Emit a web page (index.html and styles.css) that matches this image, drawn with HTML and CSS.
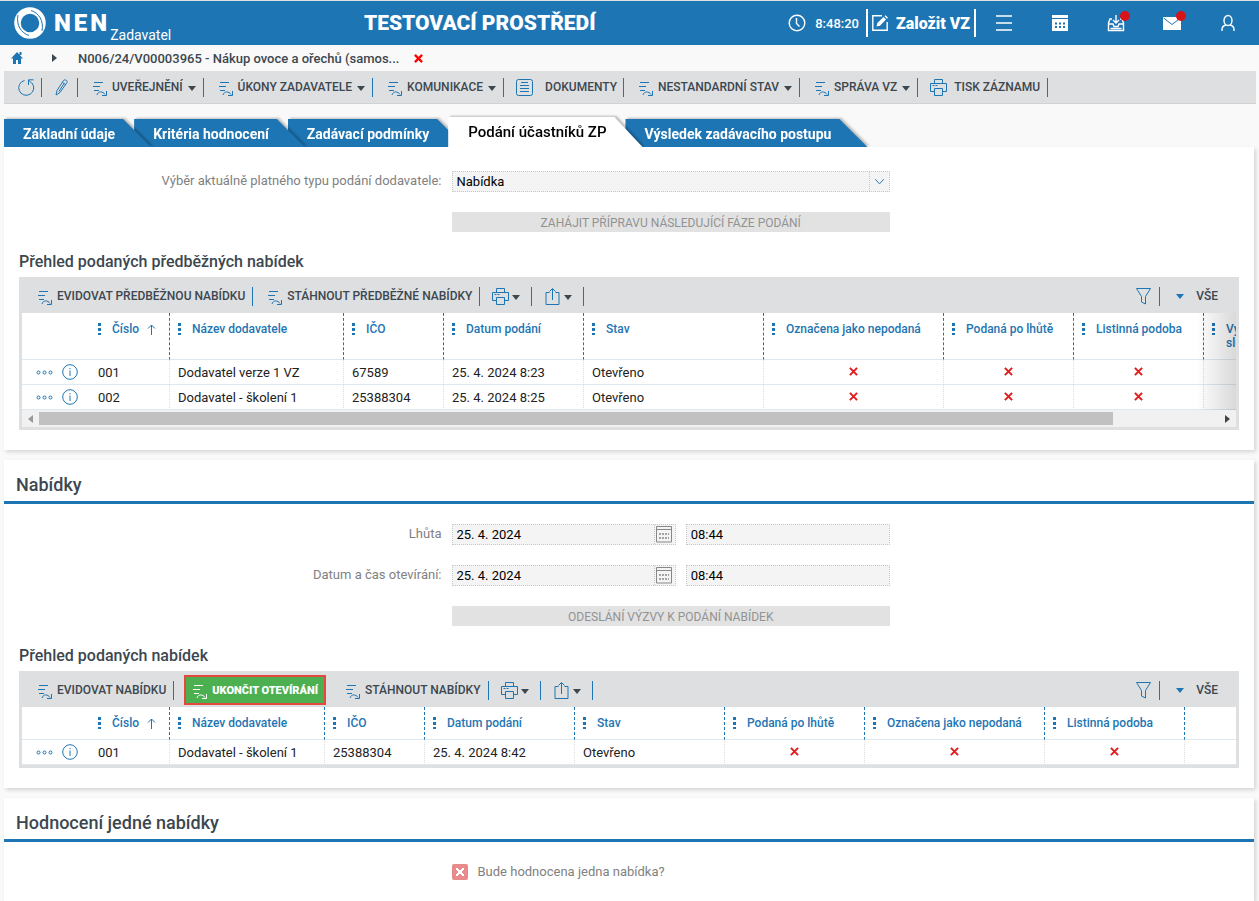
FILE: index.html
```html
<!DOCTYPE html>
<html lang="cs">
<head>
  <meta charset="UTF-8" />
  <meta name="viewport" content="width=device-width, initial-scale=1.0"/>
  <title>NEN Zadavatel</title>
  <link rel="stylesheet" href="styles.css">
</head>
<body>

<!-- ICONS -->
<svg class="sprite" aria-hidden="true">
  <symbol id="i-action" viewBox="0 0 14 14"><path d="M1 .500h9M0 4.500h7M1 8.500h5M4 13c1-4 6-4 8-.500M13.500 9v4.500H9"/></symbol>
  <symbol id="i-refresh" viewBox="0 0 17 17"><path d="M6.500 1.500a7.500 7.500 0 1 0 7.500 2.500M10.500 6V.800h5M10.500 1l3.500 3.500"/></symbol>
  <symbol id="i-pencil" viewBox="0 0 14 17"><path d="M1 16l1-4.500L8.500 1.500c1-1.500 4.500 0 3.500 2L5 13.500zM7.500 3.500l3 2M9 4.500l-5 8"/></symbol>
  <symbol id="i-doc" viewBox="0 0 17 17"><path d="M2.500.500h12a2 2 0 0 1 2 2v12a2 2 0 0 1-2 2h-12a2 2 0 0 1-2-2v-12a2 2 0 0 1 2-2zM5 3.500h7M4 6.500h9M4 9.500h9M4 12.500h9"/></symbol>
  <symbol id="i-print" viewBox="0 0 17 17"><path d="M4.500 4V.500h8V4M4.500 12.500h-4v-8h16v8h-4M4.500 9.500h8v7h-8zM2.500 6.500h2M5.500 6.500h2"/></symbol>
  <symbol id="i-share" viewBox="0 0 14 17"><path d="M4 4.500H.500v12h13v-12H10M7 12V1M4 3.500l3-3 3 3"/></symbol>
  <symbol id="i-filter" viewBox="0 0 15 17"><path d="M.500.500h14l-5 8v7.500l-4-2v-5.500z"/></symbol>
  <symbol id="i-up" viewBox="0 0 9 11"><path d="M4.500 11V1M1 4.500L4.500 1 8 4.500"/></symbol>
  <symbol id="i-more" viewBox="0 0 17 5"><circle cx="2.500" cy="2.500" r="1.500"/><circle cx="8.500" cy="2.500" r="1.500"/><circle cx="14.500" cy="2.500" r="1.500"/></symbol>
  <symbol id="i-info" viewBox="0 0 16 16"><circle cx="8" cy="8" r="7.300"/><path d="M8 6.500V12M8 4v1.200"/></symbol>
  <symbol id="i-cross" viewBox="0 0 8 8"><path d="M.800.800l6.400 6.400M7.200.800L.800 7.200"/></symbol>
  <symbol id="i-cal" viewBox="0 0 16 17"><path d="M.500.500h15v15.500H.500zM0 3.500h16"/><path stroke-width="1.500" stroke-dasharray="2 1" d="M3 8h10M3 12h10"/></symbol>
</svg>

<header class="header">
  <div class="brand">
    <svg class="logo" viewBox="0 0 32 32" aria-hidden="true">
      <circle cx="16" cy="16" r="12.500" fill="none" stroke="#fff" stroke-width="6.500"/>
      <path class="swirl" d="M4 8C2 18 7 26 15 28.500M28 24C30 14 25 6 17 3.500"/>
    </svg>
    <strong class="brand-name">NEN</strong>
    <span class="brand-role">Zadavatel</span>
  </div>
  <div class="env">TESTOVACÍ PROSTŘEDÍ</div>
  <div class="clock">
    <svg width="18" height="18" viewBox="0 0 18 18" aria-hidden="true"><circle cx="9" cy="9" r="7.800"/><path d="M8.500 4v5.500l3 3"/></svg>
    <span>8:48:20</span>
  </div>
  <button class="create" type="button">
    <svg width="17" height="16" viewBox="0 0 17 16" aria-hidden="true"><path d="M10 .800H.800v14.400h14.400V7"/><path class="solid" d="M4.500 11.500l.8-3.500L11.500 2l2.500 2.500L8 10.700zM12.500 1.200l1-1 2.500 2.500-1 1z"/></svg>
    Založit VZ
  </button>
  <nav class="header-nav">
    <button type="button" aria-label="Menu"><svg width="18" height="18" viewBox="0 0 18 18"><path d="M1 2h16M1 9h16M1 16h16"/></svg></button>
    <button type="button" aria-label="Kalendář"><svg width="18" height="18" viewBox="0 0 18 18"><path class="solid" d="M1 1h16v3H1zM1 5h16v12H1z"/><path class="cut" d="M4 9.500h2M8 9.500h2M12 9.500h2M4 13h2M8 13h2M12 13h2"/></svg></button>
    <button type="button" aria-label="Úkoly"><svg width="18" height="18" viewBox="0 0 18 18"><path d="M5 5H3L1.500 9v7.500h15V9L15 5h-2M1.500 10H6l1 2.500h4l1-2.500h4.500M9 1v8M6 6l3 3 3-3M3.500 14.500h11"/></svg><i class="dot"></i></button>
    <button type="button" aria-label="Zprávy"><svg width="18" height="18" viewBox="0 0 18 18"><path class="solid" d="M0 3h18v13H0z"/><path class="line" d="M.500 4L9 10.500 17.500 4"/></svg><i class="dot"></i></button>
    <button type="button" aria-label="Uživatel"><svg width="18" height="18" viewBox="0 0 18 18"><ellipse cx="9" cy="6.500" rx="4" ry="5"/><path d="M3 17v-1.500c0-2.500 2-4 4-4.500M15 17v-1.500c0-2.500-2-4-4-4.500"/></svg></button>
  </nav>
</header>

<nav class="crumbs">
  <a class="home" href="#" aria-label="Domů"><svg width="12" height="12" viewBox="0 0 12 12"><path d="M6 0l6 6.500h-2V12H7V8H5v4H2V6.500H0L6 0zM8.500 0h2v3h-2z"/></svg></a>
  <i class="crumb-arrow"></i>
  <a class="crumb" href="#">N006/24/V00003965 - Nákup ovoce a ořechů (samos...</a>
  <button class="crumb-close" type="button" aria-label="Zavřít"><svg width="9" height="9"><use href="#i-cross"/></svg></button>
</nav>

<div class="toolbar main-toolbar">
  <button class="tool refresh" type="button" aria-label="Obnovit"><svg width="17" height="17"><use href="#i-refresh"/></svg></button>
  <button class="tool pencil" type="button" aria-label="Upravit"><svg width="14" height="17"><use href="#i-pencil"/></svg></button>
  <button class="tool" type="button"><svg class="act" width="14" height="14"><use href="#i-action"/></svg>UVEŘEJNĚNÍ<i class="caret"></i></button>
  <button class="tool" type="button"><svg class="act" width="14" height="14"><use href="#i-action"/></svg>ÚKONY ZADAVATELE<i class="caret"></i></button>
  <button class="tool" type="button"><svg class="act" width="14" height="14"><use href="#i-action"/></svg>KOMUNIKACE<i class="caret"></i></button>
  <button class="tool docs" type="button"><svg width="17" height="17"><use href="#i-doc"/></svg>DOKUMENTY</button>
  <button class="tool" type="button"><svg class="act" width="14" height="14"><use href="#i-action"/></svg>NESTANDARDNÍ STAV<i class="caret"></i></button>
  <button class="tool" type="button"><svg class="act" width="14" height="14"><use href="#i-action"/></svg>SPRÁVA VZ<i class="caret"></i></button>
  <button class="tool print" type="button"><svg width="17" height="17"><use href="#i-print"/></svg>TISK ZÁZNAMU</button>
</div>

<nav class="tabs">
  <a class="tab" href="#">Základní údaje</a>
  <a class="tab" href="#">Kritéria hodnocení</a>
  <a class="tab" href="#">Zadávací podmínky</a>
  <a class="tab active" href="#" aria-current="page">Podání účastníků ZP</a>
  <a class="tab" href="#">Výsledek zadávacího postupu</a>
</nav>

<main>
<section class="panel">
  <div class="form form-first">
    <label for="typ">Výběr aktuálně platného typu podání dodavatele:</label>
    <div class="select">
      <select id="typ"><option>Nabídka</option></select>
      <svg width="20" height="19" viewBox="0 0 20 19" aria-hidden="true"><path d="M5.500 7l4.500 5 4.500-5"/></svg>
    </div>
    <button class="wide-btn" type="button" disabled>ZAHÁJIT PŘÍPRAVU NÁSLEDUJÍCÍ FÁZE PODÁNÍ</button>
  </div>

  <h3>Přehled podaných předběžných nabídek</h3>
  <div class="grid">
    <div class="toolbar">
      <button class="tool" type="button"><svg class="act" width="14" height="14"><use href="#i-action"/></svg>EVIDOVAT PŘEDBĚŽNOU NABÍDKU</button>
      <button class="tool" type="button"><svg class="act" width="14" height="14"><use href="#i-action"/></svg>STÁHNOUT PŘEDBĚŽNÉ NABÍDKY</button>
      <button class="tool icon-tool" type="button" aria-label="Tisk"><svg width="17" height="17"><use href="#i-print"/></svg><i class="caret"></i></button>
      <button class="tool icon-tool" type="button" aria-label="Export"><svg width="17" height="17"><use href="#i-share"/></svg><i class="caret"></i></button>
      <button class="tool filter" type="button" aria-label="Filtr"><svg width="15" height="17"><use href="#i-filter"/></svg></button>
      <button class="view" type="button"><i class="caret"></i>VŠE</button>
    </div>
    <div class="table-wrap fade">
      <table class="table-wide">
        <colgroup><col class="w-act"><col class="w80"><col class="w174"><col class="w100"><col class="w140"><col class="w180"><col class="w180"><col class="w130"><col class="w130"><col></colgroup>
        <thead>
          <tr>
            <th class="no-line"></th>
            <th class="sorted">Číslo<svg width="9" height="11"><use href="#i-up"/></svg></th>
            <th>Název dodavatele</th>
            <th>IČO</th>
            <th>Datum podání</th>
            <th>Stav</th>
            <th>Označena jako nepodaná</th>
            <th>Podaná po lhůtě</th>
            <th>Listinná podoba</th>
            <th>Vysvětlení<br>služby</th>
          </tr>
        </thead>
        <tbody>
          <tr>
            <td class="acts no-line"><button type="button" aria-label="Akce"><svg width="17" height="5"><use href="#i-more"/></svg></button><button type="button" aria-label="Info"><svg width="16" height="16"><use href="#i-info"/></svg></button></td>
            <td>001</td><td>Dodavatel verze 1 VZ</td><td>67589</td><td>25. 4. 2024 8:23</td><td>Otevřeno</td>
            <td class="no"><svg width="9" height="9"><use href="#i-cross"/></svg></td>
            <td class="no"><svg width="9" height="9"><use href="#i-cross"/></svg></td>
            <td class="no"><svg width="9" height="9"><use href="#i-cross"/></svg></td>
            <td></td>
          </tr>
          <tr>
            <td class="acts no-line"><button type="button" aria-label="Akce"><svg width="17" height="5"><use href="#i-more"/></svg></button><button type="button" aria-label="Info"><svg width="16" height="16"><use href="#i-info"/></svg></button></td>
            <td>002</td><td>Dodavatel - školení 1</td><td>25388304</td><td>25. 4. 2024 8:25</td><td>Otevřeno</td>
            <td class="no"><svg width="9" height="9"><use href="#i-cross"/></svg></td>
            <td class="no"><svg width="9" height="9"><use href="#i-cross"/></svg></td>
            <td class="no"><svg width="9" height="9"><use href="#i-cross"/></svg></td>
            <td></td>
          </tr>
        </tbody>
      </table>
    </div>
    <div class="scroll"><i class="scroll-left"></i><div class="track"><div class="thumb"></div></div><i class="scroll-right"></i></div>
  </div>
</section>

<section class="panel">
  <h2>Nabídky</h2>
  <div class="form">
    <label for="lhuta">Lhůta</label>
    <div class="datetime">
      <div class="date"><input id="lhuta" type="text" value="25. 4. 2024"><button type="button" aria-label="Kalendář"><svg width="16" height="17"><use href="#i-cal"/></svg></button></div>
      <input class="time" type="text" value="08:44" aria-label="Lhůta čas">
    </div>
    <label for="otevirani">Datum a čas otevírání:</label>
    <div class="datetime">
      <div class="date"><input id="otevirani" type="text" value="25. 4. 2024"><button type="button" aria-label="Kalendář"><svg width="16" height="17"><use href="#i-cal"/></svg></button></div>
      <input class="time" type="text" value="08:44" aria-label="Čas otevírání">
    </div>
    <button class="wide-btn" type="button" disabled>ODESLÁNÍ VÝZVY K PODÁNÍ NABÍDEK</button>
  </div>

  <h3>Přehled podaných nabídek</h3>
  <div class="grid">
    <div class="toolbar">
      <button class="tool" type="button"><svg class="act" width="14" height="14"><use href="#i-action"/></svg>EVIDOVAT NABÍDKU</button>
      <button class="tool finish" type="button"><svg class="act" width="14" height="14"><use href="#i-action"/></svg>UKONČIT OTEVÍRÁNÍ</button>
      <button class="tool" type="button"><svg class="act" width="14" height="14"><use href="#i-action"/></svg>STÁHNOUT NABÍDKY</button>
      <button class="tool icon-tool" type="button" aria-label="Tisk"><svg width="17" height="17"><use href="#i-print"/></svg><i class="caret"></i></button>
      <button class="tool icon-tool" type="button" aria-label="Export"><svg width="17" height="17"><use href="#i-share"/></svg><i class="caret"></i></button>
      <button class="tool filter" type="button" aria-label="Filtr"><svg width="15" height="17"><use href="#i-filter"/></svg></button>
      <button class="view" type="button"><i class="caret"></i>VŠE</button>
    </div>
    <div class="table-wrap">
      <table class="table-low">
        <colgroup><col class="w-act"><col class="w80"><col class="w155"><col class="w100"><col class="w150"><col class="w150"><col class="w140"><col class="w180"><col class="w140"><col></colgroup>
        <thead>
          <tr>
            <th class="no-line"></th>
            <th class="sorted">Číslo<svg width="9" height="11"><use href="#i-up"/></svg></th>
            <th>Název dodavatele</th>
            <th>IČO</th>
            <th>Datum podání</th>
            <th>Stav</th>
            <th>Podaná po lhůtě</th>
            <th>Označena jako nepodaná</th>
            <th>Listinná podoba</th>
            <th class="no-line"></th>
          </tr>
        </thead>
        <tbody>
          <tr>
            <td class="acts no-line"><button type="button" aria-label="Akce"><svg width="17" height="5"><use href="#i-more"/></svg></button><button type="button" aria-label="Info"><svg width="16" height="16"><use href="#i-info"/></svg></button></td>
            <td>001</td><td>Dodavatel - školení 1</td><td>25388304</td><td>25. 4. 2024 8:42</td><td>Otevřeno</td>
            <td class="no"><svg width="9" height="9"><use href="#i-cross"/></svg></td>
            <td class="no"><svg width="9" height="9"><use href="#i-cross"/></svg></td>
            <td class="no"><svg width="9" height="9"><use href="#i-cross"/></svg></td>
            <td class="no-line"></td>
          </tr>
        </tbody>
      </table>
    </div>
  </div>
</section>

<section class="panel">
  <h2>Hodnocení jedné nabídky</h2>
  <div class="form">
    <div class="check">
      <input id="jedna" type="checkbox">
      <label for="jedna">Bude hodnocena jedna nabídka?</label>
    </div>
  </div>
</section>
</main>

</body>
</html>
```
FILE: styles.css
```css
*{box-sizing:border-box}

body {
  margin:0;
  font-family:Roboto,sans-serif;
  font-size:13px;
  color:#222;
  background:#f9f9f9;
  border-top:1px solid #dedfe1;
  overflow-x:hidden;
}

button,input,select {font:inherit;color:inherit;border:0;margin:0;padding:0;background:none}
button {cursor:pointer}
a {color:inherit;text-decoration:none}
svg {display:block;flex:none;fill:none;stroke:#1e75b3;stroke-width:1}
.sprite {position:absolute;width:0;height:0}

/* HEADER */
.header {
  display:flex;
  align-items:center;
  height:44px;
  padding:0 3px 0 14px;
  color:#fff;
  background:#1e75b3;
}
.header svg {stroke:#fff;stroke-width:1.4}
.header .solid {fill:#fff;stroke:none}
.header .cut {stroke:#1e75b3;stroke-width:2}
.header .line,.header .swirl {stroke:#1e75b3;stroke-width:1}

.brand {display:flex;align-items:center}
.logo {width:32px;height:32px}
.brand-name {margin-left:8px;font-size:24px;font-weight:900;letter-spacing:3px}
.brand-role {align-self:flex-end;padding-top:24px;font-size:14px}
.env {flex:1;text-align:center;font-size:21px;font-weight:900}
.clock {display:flex;align-items:center;gap:9px;margin-right:7px;font-weight:500}

.create {
  display:flex;
  align-items:center;
  gap:7px;
  height:28px;
  padding:0 4px;
  border:solid #fff;
  border-width:0 2px;
  font-size:16px;
  font-weight:900;
}

.header-nav {display:flex}
.header-nav button {position:relative;display:flex;justify-content:center;width:56px}
.dot {
  position:absolute;
  top:-3px;
  right:14px;
  width:10px;
  height:10px;
  border-radius:50%;
  background:#d7141a;
}

/* BREADCRUMBS */
.crumbs {display:flex;align-items:center;height:26px;padding-left:11px;font-weight:500;color:#3c474f}
.home svg {fill:#1e75b3;stroke:none}
.crumb-arrow {margin:0 21px 0 29px;border:solid transparent;border-width:4px 0 4px 5px;border-left-color:#3c474f}
.crumb-close {margin-left:15px}
.crumb-close svg {stroke:#f00;stroke-width:2}

/* TOOLBARS */
.toolbar {display:flex;align-items:center;color:#3c474f;font-size:12px;font-weight:500}
.main-toolbar {
  height:33px;
  margin:0 3px 0 4px;
  background:#dedfe1;
  border-bottom:1px solid #d2d2d2;
}
.tool {
  display:flex;
  align-items:center;
  height:19px;
  padding:0 7px 0 15px;
  border-right:1px solid #1e75b3;
  white-space:nowrap;
}
.tool .act {margin:4px 5px 0 0}
.caret {margin:2px 0 0 5px;border:solid transparent;border-width:5px 4px 0;border-top-color:#3c474f}
.refresh {padding:0 6px 0 14px}
.pencil {padding:0 8px 0 13px}
.docs {padding:0 6px 0 12px}
.docs svg {margin-right:12px}
.print {padding-left:12px}
.print svg {margin-right:7px}

/* TABS */
.tabs {display:flex;align-items:flex-end;height:43px;padding-left:4px;overflow:hidden}
.tab {
  position:relative;
  z-index:1;
  height:28px;
  margin-right:-17px;
  padding:0 36px 0 19px;
  color:#fff;
  font-size:14px;
  font-weight:700;
  line-height:30px;
  white-space:nowrap;
  filter:drop-shadow(2px -1px 1px rgba(0,0,0,.25));
}
.tab::before {
  content:'';
  position:absolute;
  inset:0;
  z-index:-1;
  background:#1e75b3;
  clip-path:polygon(0 0,calc(100% - 28px) 0,100% 100%,0 100%);
}
.tab:nth-child(1) {z-index:3}
.tab:nth-child(2) {z-index:2}
.tab.active {z-index:4;height:30px;padding-left:20px;color:#000;font-size:15px;font-weight:500}
.tab.active::before {background:#fff}

/* PANELS */
main {display:flex;flex-direction:column;gap:10px}
.panel {
  margin:0 5px 0 4px;
  background:#fff;
  box-shadow:2px 2px 4px rgba(0,0,0,.15);
  padding-bottom:20px;
}
h2 {
  margin:0;
  padding:13px 12px 4px;
  color:#3c474f;
  border-bottom:3px solid #1e75b3;
  font-size:18px;
  font-weight:500;
  line-height:24px;
}
h3 {margin:20px 15px 5px;color:#3c474f;font-size:16px;font-weight:500;line-height:20px}

/* FORM */
.form {
  display:grid;
  grid-template-columns:35% calc(35% + 1px);
  column-gap:10px;
  row-gap:20px;
  padding-top:20px;
}
.form-first {padding-top:24px}
.form label {color:#818181;text-align:right;line-height:19px}
.select,.date,.time {height:21px;border:1px dotted #c8c8c8;background:#f4f4f4;color:#000}
.select {position:relative}
.select select {width:100%;height:19px;padding-left:4px;appearance:none;outline:0}
.select svg {
  position:absolute;
  top:0;
  right:0;
  border-left:1px dotted #c8c8c8;
  pointer-events:none;
}
.datetime {display:grid;grid-template-columns:224fr 204fr;gap:10px}
.date {display:flex}
.date input {flex:1;min-width:0;padding-left:4px}
.date button {width:21px;padding-left:1px;border-left:1px dotted #c8c8c8}
.date svg {stroke:#888}
.time {min-width:0;padding-left:4px}
.wide-btn {grid-column:2;height:20px;padding-top:1px;background:#e2e2e2;color:#929292;font-size:12px}
.check {grid-column:2;display:flex;align-items:center;gap:10px}
.check input {
  appearance:none;
  width:16px;
  height:16px;
  border-radius:2px;
  background:linear-gradient(45deg,transparent 40%,#fff 40% 60%,transparent 60%) center/8px 8px no-repeat,
    linear-gradient(-45deg,transparent 40%,#fff 40% 60%,transparent 60%) center/8px 8px no-repeat,#e98a8c;
}

/* GRIDS */
.grid {margin:0 15px;padding:0 3px 3px;background:#dedfe1}
.grid .toolbar {height:36px;padding:2px 18px 0 1px}
.icon-tool {padding:0 11px 0 12px}
.icon-tool .caret {margin-left:3px}
.filter {margin-left:auto;padding:0 8px}
.finish {
  height:30px;
  margin:0 5px 0 10px;
  padding:0 6px 0 7px;
  border:2px solid #e5483f;
  background:#4caf50;
  color:#fff;
  font-size:11px;
  font-weight:900;
}
.finish svg {stroke:#fff}
.view {display:flex;align-items:center;font-weight:500}
.view .caret {margin:0 12px 0 16px;border-top-color:#1e75b3}

.table-wrap {position:relative;overflow:hidden;background:#fff}
.fade::after {
  content:'';
  position:absolute;
  inset:0 0 0 auto;
  width:40px;
  background:linear-gradient(90deg,transparent,rgba(0,0,0,.15));
}
table {width:100%;table-layout:fixed;border-collapse:separate;border-spacing:0}
.table-wide {width:110%}
.w-act {width:68px}
.w80 {width:80px}
.w100 {width:100px}
.w130 {width:130px}
.w140 {width:140px}
.w150 {width:150px}
.w155 {width:155px}
.w174 {width:174px}
.w180 {width:180px}

th {
  position:relative;
  height:47px;
  padding:9px 0 0 22px;
  border-right:1px dashed #1e75b3;
  border-bottom:1px solid #dfe8ee;
  color:#1e75b3;
  font-size:12px;
  font-weight:500;
  line-height:14px;
  text-align:left;
  vertical-align:top;
  white-space:nowrap;
}
.table-low th {height:33px}
th:not(:empty)::before {
  content:'';
  position:absolute;
  top:9px;
  left:8px;
  width:3px;
  height:13px;
  background:radial-gradient(circle,#1e75b3 1.5px,transparent 2px) 0 0/3px 5px;
}
.sorted svg {display:inline-block;margin-left:8px;vertical-align:-2px}
td {
  height:25px;
  padding:0 8px;
  border-right:1px dotted #dcdcdc;
  border-bottom:1px solid #dfe8ee;
}
th.no-line,td.no-line {border-right:0}
.acts {padding:0 0 0 14px;white-space:nowrap}
.acts button {display:inline-block;margin-right:9px;vertical-align:middle}
.no {text-align:center}
.no svg {display:inline-block;vertical-align:1px;stroke:#e01e1e;stroke-width:1.8}

.scroll {display:flex;align-items:center;height:17px;background:#f1f1f1}
.track {flex:1}
.thumb {width:91%;height:13px;background:#c1c1c1}
.scroll-left {margin:0 6px;border:solid transparent;border-width:4px 5px 4px 0;border-right-color:#999}
.scroll-right {margin:0 6px;border:solid transparent;border-width:4px 0 4px 5px;border-left-color:#444}
```
